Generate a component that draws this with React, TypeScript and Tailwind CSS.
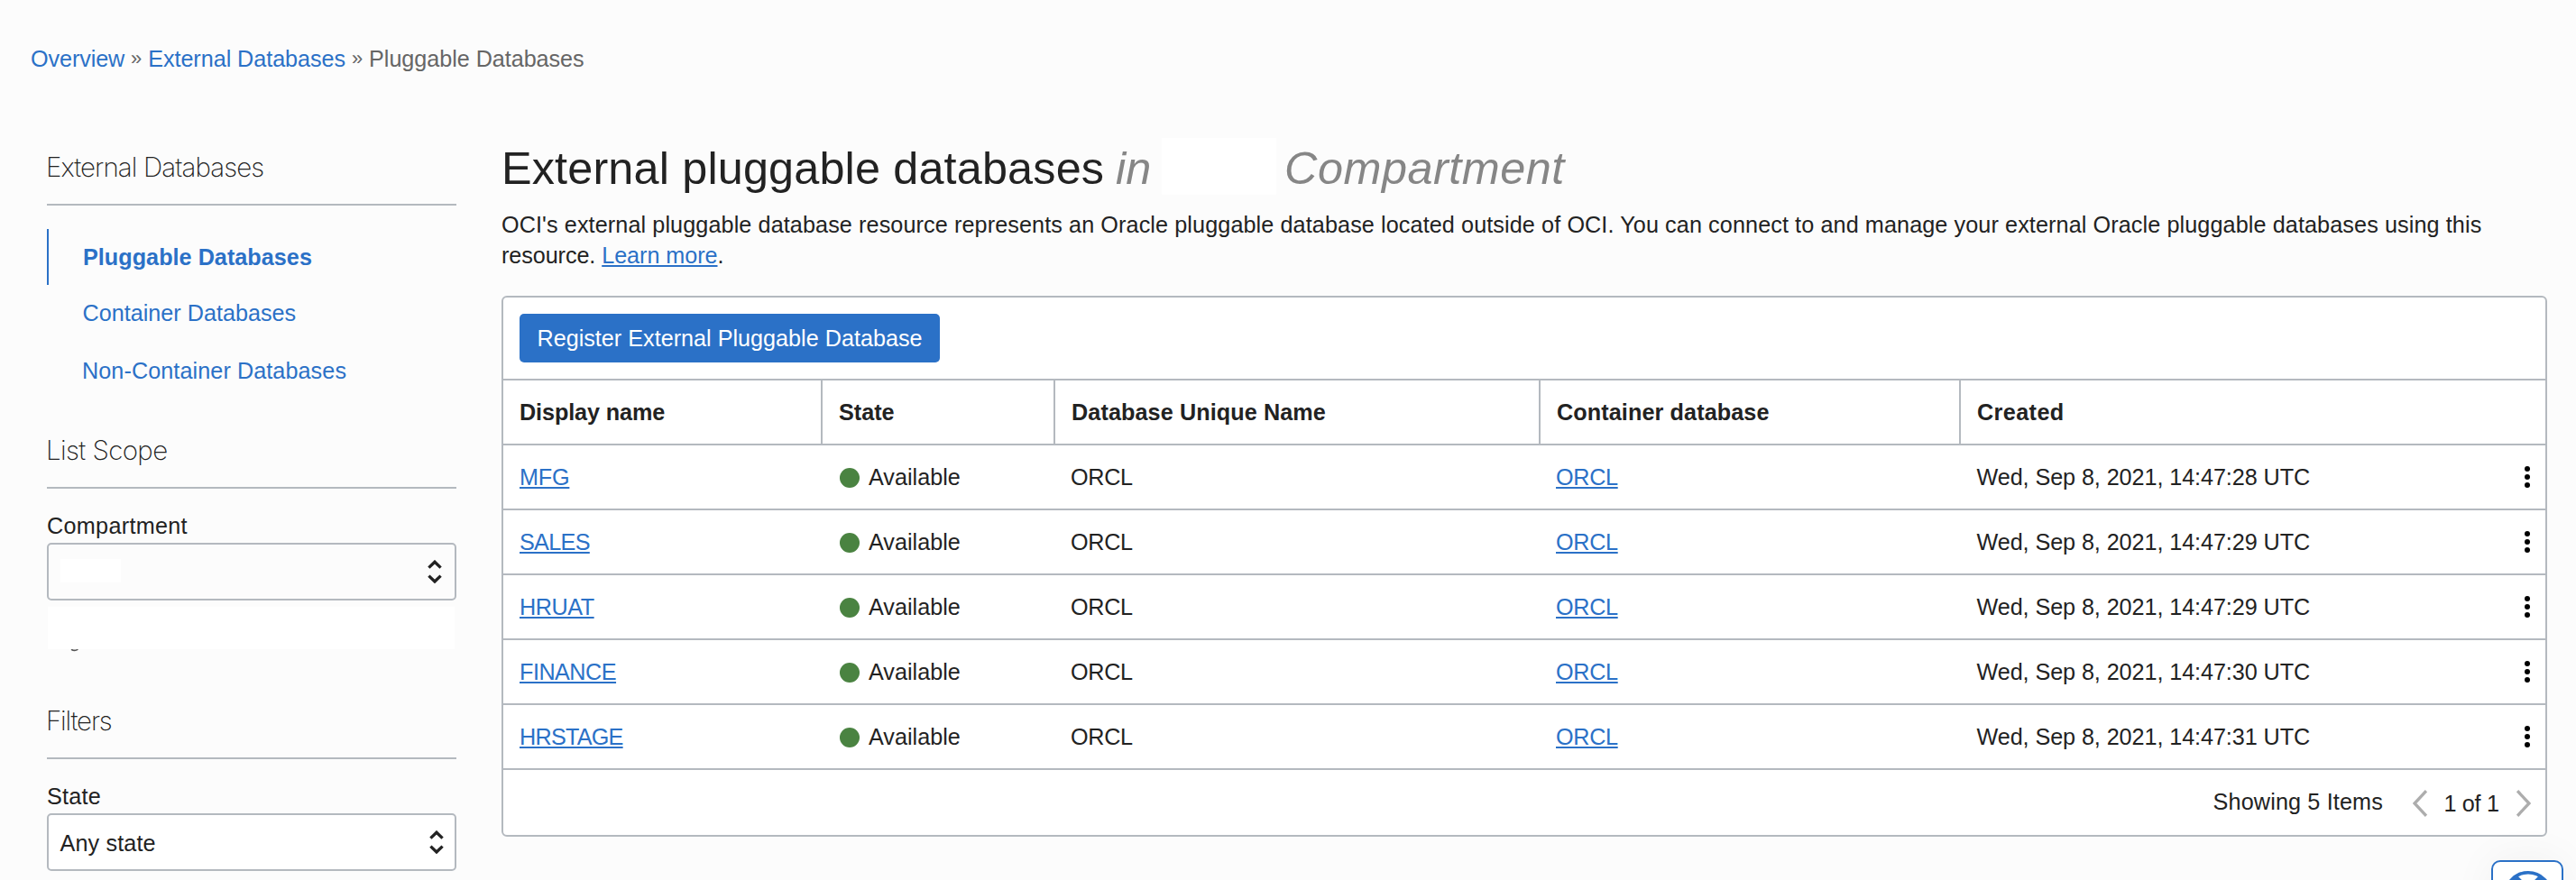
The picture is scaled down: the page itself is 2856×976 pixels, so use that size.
import type { ReactNode } from "react";

type Database = { name: string; tracking: string; created: string };

const databases: Database[] = [
  { name: "MFG", tracking: "tracking-[-0.2px]", created: "Wed, Sep 8, 2021, 14:47:28 UTC" },
  { name: "SALES", tracking: "tracking-[-0.68px]", created: "Wed, Sep 8, 2021, 14:47:29 UTC" },
  { name: "HRUAT", tracking: "tracking-[-0.45px]", created: "Wed, Sep 8, 2021, 14:47:29 UTC" },
  { name: "FINANCE", tracking: "tracking-[-0.5px]", created: "Wed, Sep 8, 2021, 14:47:30 UTC" },
  { name: "HRSTAGE", tracking: "tracking-[-0.75px]", created: "Wed, Sep 8, 2021, 14:47:31 UTC" },
];

const columns = "grid grid-cols-[354px_258px_538px_466px_1fr]";
const link =
  "text-[#2b71c7] underline decoration-2 underline-offset-[2px] [text-decoration-skip-ink:none]";

function SectionTitle({ children, className }: { children: ReactNode; className: string }) {
  return (
    <h2
      className={`h-[60px] border-b-2 border-[#b4b9bf] font-['Inter',sans-serif] text-[29.5px] leading-[34px] font-extralight whitespace-nowrap ${className}`}
    >
      {children}
    </h2>
  );
}

function SelectArrows() {
  return (
    <svg className="h-[26px] w-4 shrink-0" viewBox="0 0 16 26" fill="none" stroke="#222" strokeWidth="3.3">
      <path d="M1.4 8.6 8 2.2l6.6 6.4" />
      <path d="M1.4 17.6 8 24l6.6-6.4" />
    </svg>
  );
}

function Kebab() {
  return (
    <svg className="mr-[17px] ml-auto h-6 w-1.5" viewBox="0 0 6 24">
      <circle cx="3" cy="3" r="3" />
      <circle cx="3" cy="12" r="3" />
      <circle cx="3" cy="21" r="3" />
    </svg>
  );
}

function Sidebar() {
  return (
    <aside className="mt-[86px] w-[454px] shrink-0">
      <SectionTitle className="tracking-[-0.9px] -indent-[1px]">External Databases</SectionTitle>
      <nav className="mt-[26px] flex flex-col text-[#2b71c7]">
        <a className="flex h-[62px] items-center border-l-2 border-[#2b71c7] pl-[38px] font-bold tracking-[0.03px]">
          Pluggable Databases
        </a>
        <a className="flex h-[62px] items-center pl-[39.5px]">Container Databases</a>
        <a className="mt-[2px] flex h-[62px] items-center pl-[39px] tracking-[0.08px]">
          Non-Container Databases
        </a>
      </nav>

      <SectionTitle className="mt-10 tracking-[-0.6px] -indent-[1px]">List Scope</SectionTitle>
      <div className="mt-6 leading-[34px] tracking-[0.3px]">Compartment</div>
      <div className="mt-[2px] flex h-16 items-center justify-between rounded-[5px] border-2 border-[#b4b9bf] pr-[14px] pl-[13px]">
        <span className="mt-[-2px] h-[26px] w-[67px] bg-white" />
        <SelectArrows />
      </div>
      <div className="mt-[7px] ml-px h-[47px] w-[451px] bg-white" />
      <svg className="ml-[26px] h-[3px] w-[10px]" viewBox="0 0 10 3" fill="none" stroke="#555" strokeWidth="1.6">
        <path d="M1 0.2q3.8 2.4 7.4 0" />
      </svg>

      <SectionTitle className="mt-[59px] tracking-[-1.2px] -indent-[1px]">Filters</SectionTitle>
      <div className="mt-6 leading-[34px] tracking-[0.22px]">State</div>
      <div className="mt-[2px] flex h-16 items-center justify-between rounded-[5px] border-2 border-[#b4b9bf] bg-white pr-[12px] pl-[12.5px]">
        <span className="pt-[2px] tracking-[0.14px]">Any state</span>
        <SelectArrows />
      </div>
    </aside>
  );
}

function DatabaseTable() {
  const headerCell = "flex items-center pl-[18px]";
  return (
    <section className="mt-7 overflow-hidden rounded-[6px] border-2 border-[#b4b9bf] bg-white">
      <div className="flex h-[92px] items-center border-b-2 border-[#b4b9bf] pl-[18px]">
        <button className="h-[54px] w-[466px] rounded-[5px] bg-[#2b71c7] pb-px whitespace-nowrap text-white">
          Register External Pluggable Database
        </button>
      </div>
      <div className={`${columns} h-[72px] border-b-2 border-[#b4b9bf] font-bold`}>
        <div className={`${headerCell} border-r-2 border-[#b4b9bf] tracking-[-0.1px]`}>Display name</div>
        <div className={`${headerCell} border-r-2 border-[#b4b9bf]`}>State</div>
        <div className={`${headerCell} border-r-2 border-[#b4b9bf] tracking-[0.1px]`}>Database Unique Name</div>
        <div className={`${headerCell} border-r-2 border-[#b4b9bf] tracking-[0.1px]`}>Container database</div>
        <div className={`${headerCell} tracking-[0.4px]`}>Created</div>
      </div>
      {databases.map((db) => (
        <div key={db.name} className={`${columns} h-[72px] items-center border-b-2 border-[#b4b9bf]`}>
          <div className="pl-[18px]">
            <a className={`${link} ${db.tracking}`}>{db.name}</a>
          </div>
          <div className="flex items-center gap-[10.5px] pl-[18.5px]">
            <span className="mt-px size-[22px] rounded-full bg-[#4a8341]" />
            Available
          </div>
          <div className="pl-[17px] tracking-[-0.32px]">ORCL</div>
          <div className="pl-[17px]">
            <a className={`${link} tracking-[-0.32px]`}>ORCL</a>
          </div>
          <div className="flex items-center pl-[17.5px]">
            <span className="tracking-[-0.08px]">{db.created}</span>
            <Kebab />
          </div>
        </div>
      ))}
      <div className="flex h-[72px] items-center justify-end pr-[16px]">
        <span className="mr-[33px] pb-[2px] tracking-[0.15px]">Showing 5 Items</span>
        <svg className="mt-[2px] h-[30px] w-4" viewBox="0 0 16 30" fill="none" stroke="#adadad" strokeWidth="3.4">
          <path d="M15 1.2 2 15l13 13.8" />
        </svg>
        <span className="w-[99px] pt-px pr-px text-center tracking-[-0.3px]">1 of 1</span>
        <svg className="mt-[2px] h-[30px] w-4" viewBox="0 0 16 30" fill="none" stroke="#adadad" strokeWidth="3.4">
          <path d="M1 1.2 14 15 1 28.8" />
        </svg>
      </div>
    </section>
  );
}

function HelpButton() {
  return (
    <button className="absolute top-[954px] left-[2762px] flex h-20 w-20 items-start justify-center rounded-[10px] border-2 border-[#2b71c7] bg-white pt-[10px] shadow-[0_0_48px_rgba(0,0,0,0.05)]">
      <svg className="ml-[2px] size-[54px] shrink-0" viewBox="0 0 54 54" fill="none" stroke="#2b71c7">
        <circle cx="27" cy="27" r="25.3" strokeWidth="3.4" />
        <circle cx="27" cy="27" r="11" strokeWidth="3" />
        <path d="M9.5 9.5 19 19M44.5 9.5 35 19M9.5 44.5 19 35M44.5 44.5 35 35" strokeWidth="14" />
      </svg>
    </button>
  );
}

export default function App() {
  return (
    <div className="relative h-[976px] w-[2856px] overflow-hidden bg-[#fcfcfc] font-['Liberation_Sans',Arial,sans-serif] text-[25.2px] leading-[34px] text-[#222]">
      <nav className="flex pt-12 pl-[34px] text-[#666]">
        <a className="tracking-[-0.1px] text-[#2b71c7]">Overview</a>
        <span className="w-[26px] text-center text-[22px]">»</span>
        <a className="tracking-[-0.05px] text-[#2b71c7]">External Databases</a>
        <span className="w-[26px] text-center text-[22px]">»</span>
        <span className="tracking-[-0.05px]">Pluggable Databases</span>
      </nav>
      <div className="flex pl-[52px]">
        <Sidebar />
        <main className="mt-[71px] ml-[50px] w-[2268px]">
          <h1 className="flex h-[63px] text-[50.4px] leading-[67px] whitespace-nowrap">
            <span className="w-[681px] tracking-[0.15px]">External pluggable databases</span>
            <span className="w-[51px] text-[#868686] italic">in</span>
            <span className="h-[63px] w-[127px] bg-white" />
            <span className="pl-[9px] tracking-[0.5px] text-[#868686] italic">Compartment</span>
          </h1>
          <p className="mt-4 tracking-[0.1px]">
            OCI's external pluggable database resource represents an Oracle pluggable database located
            outside of OCI. You can connect to and manage your external Oracle pluggable databases using
            this <span className="tracking-[-0.08px]">resource. </span>
            <a className={`${link} tracking-[-0.05px]`}>Learn more</a>.
          </p>
          <DatabaseTable />
        </main>
      </div>
      <HelpButton />
    </div>
  );
}
